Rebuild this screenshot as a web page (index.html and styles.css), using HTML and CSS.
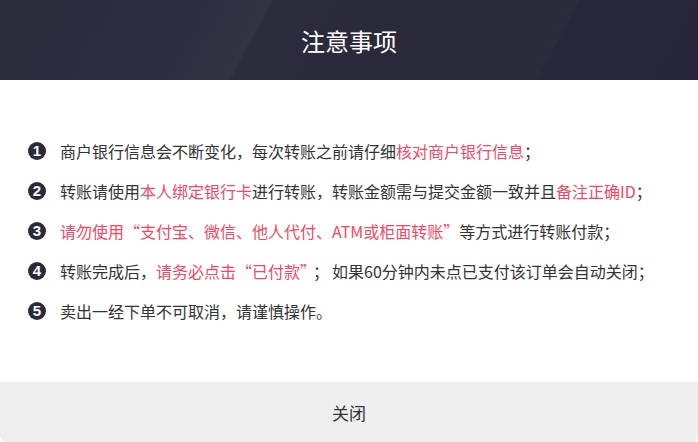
FILE: index.html
```html
<!DOCTYPE html>
<html lang="zh-CN">
<head>
<meta charset="utf-8">
<title>注意事项</title>
<link rel="stylesheet" href="styles.css">
</head>
<body>
<div class="dialog">
  <header class="dialog-header">注意事项</header>
  <main class="dialog-body">
    <ol class="notes">
      <li class="note"><span class="num">1</span><span class="text">商户银行信息会不断变化，每次转账之前请仔细<em>核对商户银行信息</em>；</span></li>
      <li class="note"><span class="num">2</span><span class="text">转账请使用<em>本人绑定银行卡</em>进行转账，转账金额需与提交金额一致并且<em>备注正确ID</em>；</span></li>
      <li class="note"><span class="num">3</span><span class="text"><em>请勿使用“支付宝、微信、他人代付、ATM或柜面转账”</em>等方式进行转账付款；</span></li>
      <li class="note"><span class="num">4</span><span class="text">转账完成后，<em>请务必点击“已付款”</em><span class="semi">；</span>如果60分钟内未点已支付该订单会自动关闭；</span></li>
      <li class="note"><span class="num">5</span><span class="text">卖出一经下单不可取消，请谨慎操作。</span></li>
    </ol>
  </main>
  <footer class="dialog-footer"><button class="close-btn" type="button">关闭</button></footer>
</div>
</body>
</html>
```

FILE: styles.css
```css
* { box-sizing: border-box; }
html, body { margin: 0; padding: 0; background: #ffffff; }
body {
  font-family: "Noto Sans CJK SC", "Noto Sans", sans-serif;
  color: #333333;
}
.dialog {
  width: 698px;
  height: 442px;
  display: flex;
  flex-direction: column;
  background: #ffffff;
  border-radius: 0 0 6px 6px;
  overflow: hidden;
}
.dialog-header {
  height: 80px;
  display: flex;
  align-items: center;
  justify-content: center;
  color: #ffffff;
  font-size: 24px;
  background:
    linear-gradient(118deg,
      #2c2b3c 0%, #2e2d3f 25%, #343344 36.5%, #2d2c3d 37%,
      #2a293a 60%, #2c2b3c 78%, #28273a 78.5%, #25243a 100%);
}
.dialog-body {
  flex: 1;
  padding: 59px 28px 0;
}
.notes {
  list-style: none;
  margin: 0;
  padding: 0;
  display: flex;
  flex-direction: column;
  gap: 16px;
}
.note {
  display: flex;
  align-items: center;
  height: 24px;
  font-size: 16px;
  line-height: 24px;
}
.num {
  flex: none;
  width: 18px;
  height: 18px;
  border-radius: 50%;
  background: #2a2a3a;
  color: #ffffff;
  font-family: "Liberation Sans", "Noto Sans", sans-serif;
  font-weight: 700;
  font-size: 15px;
  line-height: 18px;
  text-align: center;
  margin-right: 14px;
}
.text { white-space: nowrap; }
.text em {
  font-style: normal;
  color: #f5475f;
}
.semi { margin: 0 3px 0 5px; }
.dialog-footer {
  height: 60px;
  background: #efefef;
  display: flex;
}
.close-btn {
  flex: 1;
  border: 0;
  background: transparent;
  font-family: "Noto Sans CJK SC", "Noto Sans", sans-serif;
  font-size: 17px;
  color: #333333;
  cursor: pointer;
}
```
